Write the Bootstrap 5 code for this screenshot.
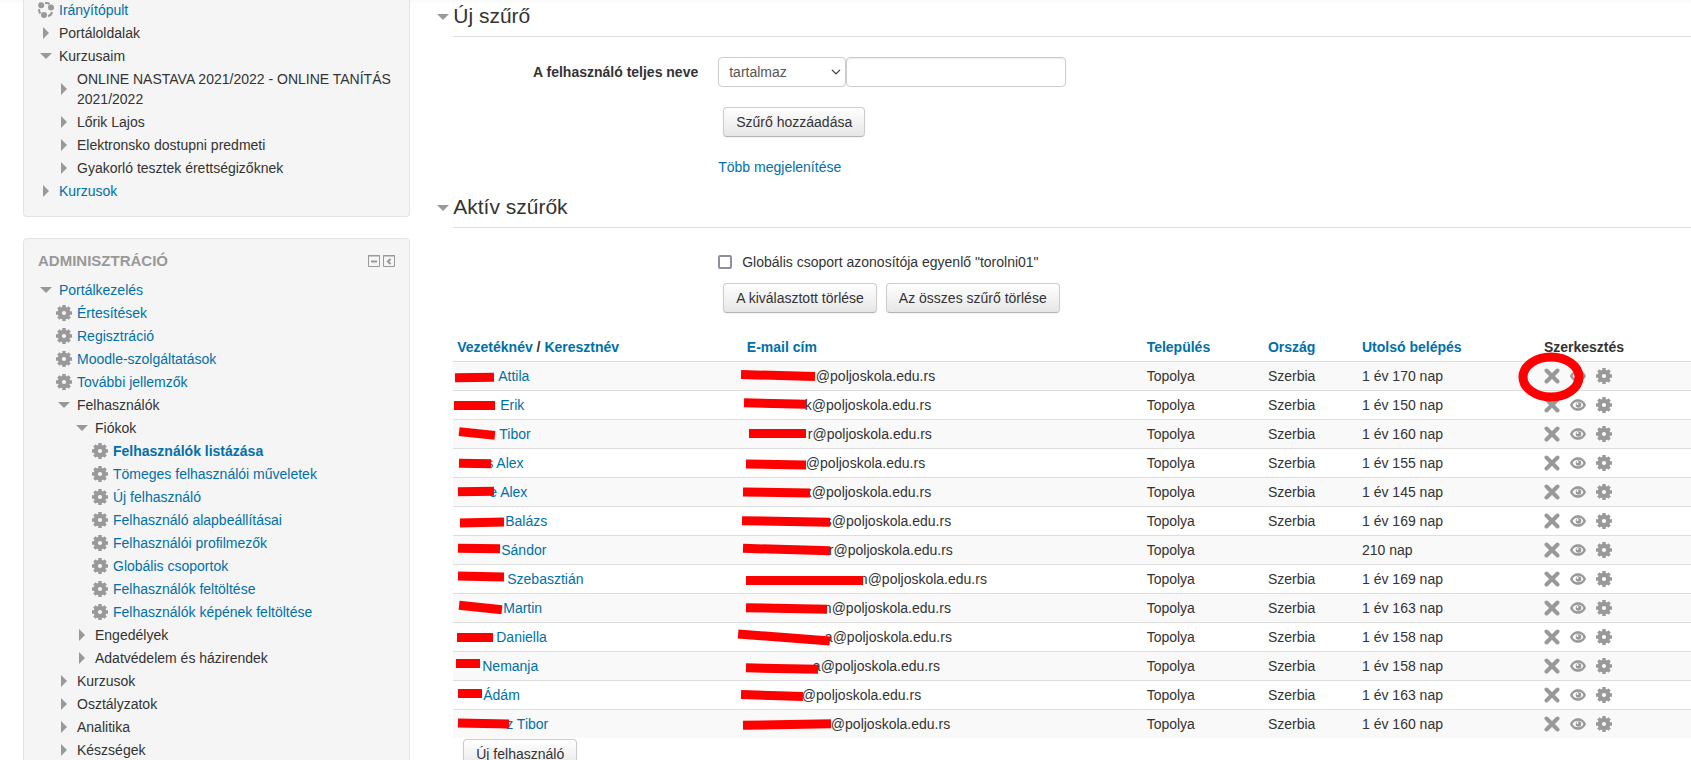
<!DOCTYPE html>
<html lang="hu">
<head>
<meta charset="utf-8">
<meta name="viewport" content="width=device-width, initial-scale=1">
<title>Felhasználók listázása</title>
<link href="https://cdn.jsdelivr.net/npm/bootstrap@5.3.0/dist/css/bootstrap.min.css" rel="stylesheet">
<style>
  body { font: 14px/20px "Liberation Sans", Arial, sans-serif; color: #333; background: #fff linear-gradient(#f9f9f9, #fff) 0 0 / 100% 4px no-repeat; }
  a { color: #0070a8; text-decoration: none; }
  a:hover { text-decoration: underline; }
  svg { display: block; }
  .side { flex: 0 0 22.9%; margin-left: 23px; }
  .block { background: #f5f5f5; border: 1px solid #e3e3e3; border-radius: 4px; padding: 12px 14px; }
  .block-first { border-top: 0; border-radius: 0 0 4px 4px; padding-top: 0; margin-bottom: 21px; }
  .block-head { margin-bottom: 9px; }
  .block-title { font-size: 15px; line-height: 20px; font-weight: 700; color: #999; margin: 0; }
  .tool { border: 0; background: none; padding: 0; color: #999; }
  .tool + .tool { margin-left: 3px; }
  .tree { list-style: none; margin: 0; padding: 0; }
  .tree .tree { padding-left: 18px; }
  .node { display: flex; align-items: center; gap: 5px; padding-bottom: 3px; }
  .ico { flex: 0 0 16px; width: 16px; height: 16px; color: #999; fill: currentColor; }
  .main { min-width: 0; margin-left: 25px; }
  .filters { margin-top: -4px; }
  .filters + .filters { margin-top: 10px; }
  .section-head { display: flex; align-items: center; }
  .section-head .ico { margin-right: 2px; }
  .section-head h2 { flex: 1; margin: 0; font-size: 21px; line-height: 40px; font-weight: 400; border-bottom: 1px solid #ddd; }
  .form-line { display: grid; grid-template-columns: 245px 1fr; column-gap: 20px; margin: 20px 0 0 18px; }
  .form-line > :last-child { grid-column: 2; }
  .form-line label.title { text-align: right; font-weight: 700; line-height: 30px; }
  .pick-line { margin-top: 24px; }
  .pick-line > div { gap: 10px; }
  .pick-line + .form-line { margin-top: 11px; }
  .actions { display: flex; gap: 9px; padding-left: 5px; }
  .field { height: 30px; font-size: 14px; line-height: 20px; padding: 4px 6px; border: 1px solid #ccc; border-radius: 4px; color: #555; }
  select.field { width: 128px; padding-left: 10px; padding-right: 20px; background-position: right 4px center; background-size: 10px 10px; }
  input.field { width: 220px; box-shadow: inset 0 1px 1px rgba(0,0,0,.075); }
  .btn-grey { font-size: 14px; line-height: 20px; height: 30px; padding: 4px 12px; color: #333; border: 1px solid #ccc; border-bottom-color: #b3b3b3; border-radius: 4px; background: linear-gradient(#fff, #e6e6e6); box-shadow: 0 1px 2px rgba(0,0,0,.05); }
  .tick { appearance: none; width: 14px; height: 14px; margin: 0; border: 2px solid #8f8f9d; border-radius: 2px; background: #fff; }
  .list-wrap { margin: 20px 0 0 18px; }
  .new-user { margin: 1px 0 0 10px; }
  .users { margin: 0; table-layout: fixed; line-height: 20px; color: #333; }
  .users > :not(caption) > * > * { padding: 4px; border: 0; white-space: nowrap; color: #333; box-shadow: none; }
  .users > tbody > tr > td { border-top: 1px solid #ddd; }
  .users > tbody > tr:nth-child(odd) > td { background: #f9f9f9; }
  .veil { position: relative; display: inline-block; height: 10px; }
  .veil i { position: absolute; height: 9px; background: #f00; z-index: 1; }
  .ops { display: flex; gap: 10px; height: 20px; align-items: center; position: relative; }
  .ring { position: absolute; left: -27px; top: -15px; z-index: 2; pointer-events: none; }
</style>
</head>
<body class="vh-100 overflow-hidden">
<svg width="0" height="0" class="position-absolute" aria-hidden="true">
  <symbol id="right" viewBox="0 0 16 16"><path d="M5 2l6 6-6 6z"/></symbol>
  <symbol id="down" viewBox="0 0 16 16"><path d="M2 5h12l-6 6z"/></symbol>
  <symbol id="gear" viewBox="0 0 16 16"><circle cx="8" cy="8" r="4.200" fill="none" stroke="currentColor" stroke-width="4.200"/><path d="M8 0v4M8 12v4M0 8h4M12 8h4M2.400 2.400l2.800 2.800M10.800 10.800l2.800 2.800M2.400 13.600l2.800-2.800M10.800 5.200l2.800-2.800" fill="none" stroke="currentColor" stroke-width="3.400"/></symbol>
  <symbol id="cross" viewBox="0 0 16 16"><path d="M2.500 2.500l11 11M13.500 2.500l-11 11" stroke="currentColor" stroke-width="4" stroke-linecap="round"/></symbol>
  <symbol id="eye" viewBox="0 0 16 16"><path fill-rule="evenodd" d="M0 8C1.500 4 5 2.200 8 2.200S14.500 4 16 8c-1.500 4-5 5.800-8 5.800S1.500 12 0 8zM2.600 8c1 2.200 3 3.300 5.400 3.300s4.400-1.100 5.400-3.300C12.400 5.800 10.400 4.700 8 4.700S3.600 5.800 2.600 8z"/><circle cx="8.500" cy="8" r="2.800"/><circle cx="7.500" cy="7" r="1" fill="#fff"/></symbol>
  <symbol id="dash" viewBox="0 0 16 16"><circle cx="3.200" cy="3.200" r="3"/><circle cx="13" cy="5.500" r="3"/><circle cx="6" cy="13" r="3"/><path d="M7 1.200q3-.4 4.500 1M1.500 7q-1 2.500 1 4.500M10 14q3.500-.8 4-4" fill="none" stroke="currentColor" stroke-width="2"/></symbol>
</svg>

<div class="d-flex">
  <aside class="side">
    <nav class="block block-first" aria-label="Navigáció">
      <ul class="tree">
        <li><div class="node"><svg class="ico"><use href="#dash"/></svg><a href="#">Irányítópult</a></div></li>
        <li><div class="node"><svg class="ico"><use href="#right"/></svg><span>Portáloldalak</span></div></li>
        <li><div class="node"><svg class="ico"><use href="#down"/></svg><span>Kurzusaim</span></div>
          <ul class="tree">
            <li><div class="node"><svg class="ico"><use href="#right"/></svg><span>ONLINE NASTAVA 2021/2022 - ONLINE TANÍTÁS 2021/2022</span></div></li>
            <li><div class="node"><svg class="ico"><use href="#right"/></svg><span>Lőrik Lajos</span></div></li>
            <li><div class="node"><svg class="ico"><use href="#right"/></svg><span>Elektronsko dostupni predmeti</span></div></li>
            <li><div class="node"><svg class="ico"><use href="#right"/></svg><span>Gyakorló tesztek érettségizőknek</span></div></li>
          </ul></li>
        <li><div class="node"><svg class="ico"><use href="#right"/></svg><a href="#">Kurzusok</a></div></li>
      </ul>
    </nav>

    <nav class="block" aria-label="Adminisztráció">
      <div class="block-head d-flex align-items-center">
        <h2 class="block-title flex-grow-1 text-uppercase">Adminisztráció</h2>
        <button class="tool" aria-label="Elrejtés"><svg width="12" height="12" fill="none" stroke="currentColor"><path d="M.5 .5h11v11H.5zM0 1h12"/><path d="M3 6.500h6" stroke-width="2"/></svg></button>
        <button class="tool" aria-label="Dokkolás"><svg width="12" height="12" fill="none" stroke="currentColor"><path d="M.5 .5h11v11H.5zM0 1h12"/><path d="M7.500 4L5 6.500 7.500 9" stroke-width="2"/></svg></button>
      </div>
      <ul class="tree">
        <li><div class="node"><svg class="ico"><use href="#down"/></svg><a href="#">Portálkezelés</a></div>
          <ul class="tree">
            <li><div class="node"><svg class="ico"><use href="#gear"/></svg><a href="#">Értesítések</a></div></li>
            <li><div class="node"><svg class="ico"><use href="#gear"/></svg><a href="#">Regisztráció</a></div></li>
            <li><div class="node"><svg class="ico"><use href="#gear"/></svg><a href="#">Moodle-szolgáltatások</a></div></li>
            <li><div class="node"><svg class="ico"><use href="#gear"/></svg><a href="#">További jellemzők</a></div></li>
            <li><div class="node"><svg class="ico"><use href="#down"/></svg><span>Felhasználók</span></div>
              <ul class="tree">
                <li><div class="node"><svg class="ico"><use href="#down"/></svg><span>Fiókok</span></div>
                  <ul class="tree">
                    <li><div class="node"><svg class="ico"><use href="#gear"/></svg><a href="#" class="fw-bold">Felhasználók listázása</a></div></li>
                    <li><div class="node"><svg class="ico"><use href="#gear"/></svg><a href="#">Tömeges felhasználói műveletek</a></div></li>
                    <li><div class="node"><svg class="ico"><use href="#gear"/></svg><a href="#">Új felhasználó</a></div></li>
                    <li><div class="node"><svg class="ico"><use href="#gear"/></svg><a href="#">Felhasználó alapbeállításai</a></div></li>
                    <li><div class="node"><svg class="ico"><use href="#gear"/></svg><a href="#">Felhasználói profilmezők</a></div></li>
                    <li><div class="node"><svg class="ico"><use href="#gear"/></svg><a href="#">Globális csoportok</a></div></li>
                    <li><div class="node"><svg class="ico"><use href="#gear"/></svg><a href="#">Felhasználók feltöltése</a></div></li>
                    <li><div class="node"><svg class="ico"><use href="#gear"/></svg><a href="#">Felhasználók képének feltöltése</a></div></li>
                  </ul></li>
                <li><div class="node"><svg class="ico"><use href="#right"/></svg><span>Engedélyek</span></div></li>
                <li><div class="node"><svg class="ico"><use href="#right"/></svg><span>Adatvédelem és házirendek</span></div></li>
              </ul></li>
            <li><div class="node"><svg class="ico"><use href="#right"/></svg><span>Kurzusok</span></div></li>
            <li><div class="node"><svg class="ico"><use href="#right"/></svg><span>Osztályzatok</span></div></li>
            <li><div class="node"><svg class="ico"><use href="#right"/></svg><span>Analitika</span></div></li>
            <li><div class="node"><svg class="ico"><use href="#right"/></svg><span>Készségek</span></div></li>
          </ul></li>
      </ul>
    </nav>
  </aside>

  <main class="main flex-grow-1">
    <form onsubmit="return false">
      <section class="filters">
        <div class="section-head"><svg class="ico"><use href="#down"/></svg><h2>Új szűrő</h2></div>
        <div class="form-line">
          <label class="title" for="op">A felhasználó teljes neve</label>
          <div class="d-flex">
            <select id="op" class="form-select field"><option>tartalmaz</option></select>
            <input id="val" type="text" class="form-control field" aria-label="Érték">
          </div>
        </div>
        <div class="form-line"><div class="actions"><button class="btn btn-grey">Szűrő hozzáadása</button></div></div>
        <div class="form-line"><div><a href="#">Több megjelenítése</a></div></div>
      </section>
      <section class="filters">
        <div class="section-head"><svg class="ico"><use href="#down"/></svg><h2>Aktív szűrők</h2></div>
        <div class="form-line pick-line">
          <div class="d-flex align-items-center"><input type="checkbox" class="tick" id="f1"><label for="f1">Globális csoport azonosítója egyenlő "torolni01"</label></div>
        </div>
        <div class="form-line"><div class="actions"><button class="btn btn-grey">A kiválasztott törlése</button><button class="btn btn-grey">Az összes szűrő törlése</button></div></div>
      </section>
    </form>

    <div class="list-wrap">
      <table class="table users">
        <colgroup><col style="width:23.4%"><col style="width:32.3%"><col style="width:9.8%"><col style="width:7.6%"><col style="width:14.7%"><col></colgroup>
        <thead><tr>
          <th><a href="#">Vezetéknév</a> / <a href="#">Keresztnév</a></th>
          <th><a href="#">E-mail cím</a></th><th><a href="#">Település</a></th><th><a href="#">Ország</a></th><th><a href="#">Utolsó belépés</a></th><th>Szerkesztés</th>
        </tr></thead>
        <tbody id="rows"></tbody>
      </table>
      <button class="btn btn-grey new-user">Új felhasználó</button>
    </div>
  </main>
</div>
<script>
  // Each cell: [masked width, visible text, bar left, bar width, bar shift, bar angle]
  const users = [
    [[41,'Attila',-2,39,2,-1],[69,'@',-6,74,0,1.5],'Szerbia','1 év 170 nap'],
    [[43,'Erik',-3,41,1,0],[58,'k@',-3,62,-1,1.5],'Szerbia','1 év 150 nap'],
    [[42,'Tibor',2,36,0,6],[61,'r@',2,57,0,0],'Szerbia','1 év 160 nap'],
    [[29,'s Alex',2,32,1,1],[59,'@',-1,60,2,1],'Szerbia','1 év 155 nap'],
    [[32,'e Alex',1,36,0,-1],[58,'x@',-4,67,1,1],'Szerbia','1 év 145 nap'],
    [[48,'Balázs',3,44,2,-1],[78,'s@',-5,88,1,1],'Szerbia','1 év 169 nap'],
    [[44,'Sándor',1,42,-1,1],[82,'r@',-4,87,0,1.5],'','210 nap'],
    [[50,'Szebasztián',1,46,-2,1],[113,'n@',-1,117,2,0],'Szerbia','1 év 169 nap'],
    [[46,'Martin',2,43,0,6],[77,'n@',-1,81,1,1],'Szerbia','1 év 163 nap'],
    [[39,'Daniella',0,36,1,0],[78,'a@',-9,92,1,4.5],'Szerbia','1 év 158 nap'],
    [[25,'Nemanja',-1,24,-2,0],[66,'a@',-1,72,3,1],'Szerbia','1 év 158 nap'],
    [[26,'Ádám',1,24,-1,0],[55,'@',-6,62,1,2],'Szerbia','1 év 163 nap'],
    [[49,'z Tibor',1,51,0,1],[84,'@',-4,88,1,-1],'Szerbia','1 év 160 nap']
  ];
  const veil = c => `<span class="veil" style="width:${c[0]}px"><i style="left:${c[2]}px;width:${c[3]}px;top:${c[4]}px;transform:rotate(${c[5]}deg)"></i></span>${c[1]}`;
  const op = (id, label) => `<a href="#" aria-label="${label}"><svg class="ico"><use href="#${id}"/></svg></a>`;
  const ring = '<svg class="ring" width="68" height="52"><ellipse cx="34" cy="26" rx="28" ry="20" fill="none" stroke="#f00" stroke-width="9"/></svg>';
  document.getElementById('rows').innerHTML = users.map((u, i) =>
    `<tr><td><a href="#">${veil(u[0])}</a></td><td>${veil(u[1])}poljoskola.edu.rs</td><td>Topolya</td><td>${u[2]}</td><td>${u[3]}</td>` +
    `<td><div class="ops">${op('cross','Törlés')}${op('eye','Felfüggesztés')}${op('gear','Szerkesztés')}${i ? '' : ring}</div></td></tr>`).join('');
</script>
<script src="https://cdn.jsdelivr.net/npm/bootstrap@5.3.0/dist/js/bootstrap.bundle.min.js"></script>
</body>
</html>
